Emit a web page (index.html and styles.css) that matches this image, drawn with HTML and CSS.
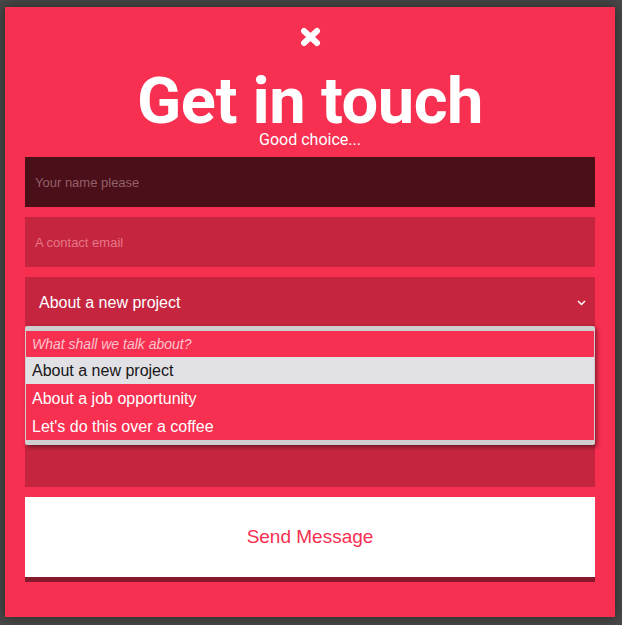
FILE: index.html
```html
<!DOCTYPE html>
<html>
<head>
<meta charset="utf-8">
<link rel="stylesheet" href="styles.css">
</head>
<body>
<div class="card">
  <div class="close">
    <svg width="21" height="20" viewBox="0 0 21 20"><path d="M4 4 L17 16 M17 4 L4 16" stroke="#fff" stroke-width="6" stroke-linecap="round"/></svg>
  </div>
  <h1 class="title">Get in touch</h1>
  <p class="subtitle">Good choice...</p>
  <form class="form">
    <input class="field field-dark" type="text" placeholder="Your name please">
    <input class="field" type="text" placeholder="A contact email">
    <div class="select-wrap">
      <div class="select">
        <span>About a new project</span>
        <svg class="chevron" width="9" height="6" viewBox="0 0 9 6"><path d="M1 1 L4.5 4.5 L8 1" stroke="#fff" stroke-width="1.5" fill="none"/></svg>
      </div>
      <div class="dropdown">
        <div class="opt opt-head">What shall we talk about?</div>
        <div class="opt opt-sel">About a new project</div>
        <div class="opt opt-tall">About a job opportunity</div>
        <div class="opt opt-tall">Let's do this over a coffee</div>
      </div>
    </div>
    <textarea class="field area"></textarea>
    <button class="send" type="button">Send Message</button>
  </form>
</div>
</body>
</html>
```
FILE: styles.css
```css
html, body {
  margin: 0;
  padding: 0;
  background: #474747;
  height: 100%;
  overflow: hidden;
}
.card {
  box-sizing: border-box;
  margin: 7px 0 0 5px;
  width: 610px;
  height: 610px;
  padding: 20px 20px 35px;
  background: #f72f50;
  box-shadow: 0 0 10px rgba(0, 0, 0, 0.45);
  font-family: "Liberation Sans", Arial, sans-serif;
}
.close {
  height: 20px;
  display: flex;
  justify-content: center;
}
.close svg {
  display: block;
}
.title {
  margin: 24px 0 0;
  font-family: Roboto, sans-serif;
  font-weight: 700;
  font-size: 65px;
  line-height: 60px;
  color: #fff;
  text-align: center;
  letter-spacing: -0.5px;
}
.subtitle {
  margin: 1px 0 0;
  font-family: Roboto, sans-serif;
  font-size: 16px;
  line-height: 16px;
  color: #fff;
  text-align: center;
}
.form {
  margin-top: 9px;
  display: flex;
  flex-direction: column;
  gap: 10px;
}
.field {
  box-sizing: border-box;
  display: block;
  width: 100%;
  height: 50px;
  margin: 0;
  border: 0;
  outline: none;
  padding: 0 10px;
  background: #c5253f;
  font-family: "Liberation Sans", Arial, sans-serif;
  font-size: 13px;
  color: #fff;
}
.field::placeholder {
  color: #e87688;
}
.field-dark {
  background: #4a0f18;
}
.field-dark::placeholder {
  color: #94606a;
}
.area {
  height: 150px;
  resize: none;
}
.select-wrap {
  position: relative;
}
.select {
  box-sizing: border-box;
  height: 50px;
  padding: 1px 9px 0 14px;
  background: #c5253f;
  color: #fff;
  font-size: 16px;
  display: flex;
  align-items: center;
  justify-content: space-between;
}
.chevron {
  display: block;
}
.dropdown {
  position: absolute;
  z-index: 2;
  top: 49px;
  left: 0;
  right: 0;
  box-sizing: border-box;
  height: 119px;
  border: 1px solid #cfcfcf;
  border-top-width: 5px;
  border-bottom-width: 5px;
  border-radius: 2px;
  background: #f72f50;
  box-shadow: 2px 2px 4px rgba(0, 0, 0, 0.45);
}
.opt {
  height: 27px;
  padding-left: 6px;
  display: flex;
  align-items: center;
  font-size: 16px;
  color: #fff;
}
.opt-tall {
  height: 28px;
  padding-top: 1px;
  box-sizing: border-box;
}
.opt-head {
  height: 26px;
  font-size: 14px;
  font-style: italic;
  color: #fbc3cd;
}
.opt-sel {
  background: #e1e0e5;
  color: #161616;
}
.send {
  box-sizing: border-box;
  height: 85px;
  margin: 0;
  border: 0;
  border-bottom: 5px solid #861a2c;
  background: #fff;
  color: #f72f50;
  font-family: "Liberation Sans", Arial, sans-serif;
  font-size: 19px;
  padding: 0;
}
```
